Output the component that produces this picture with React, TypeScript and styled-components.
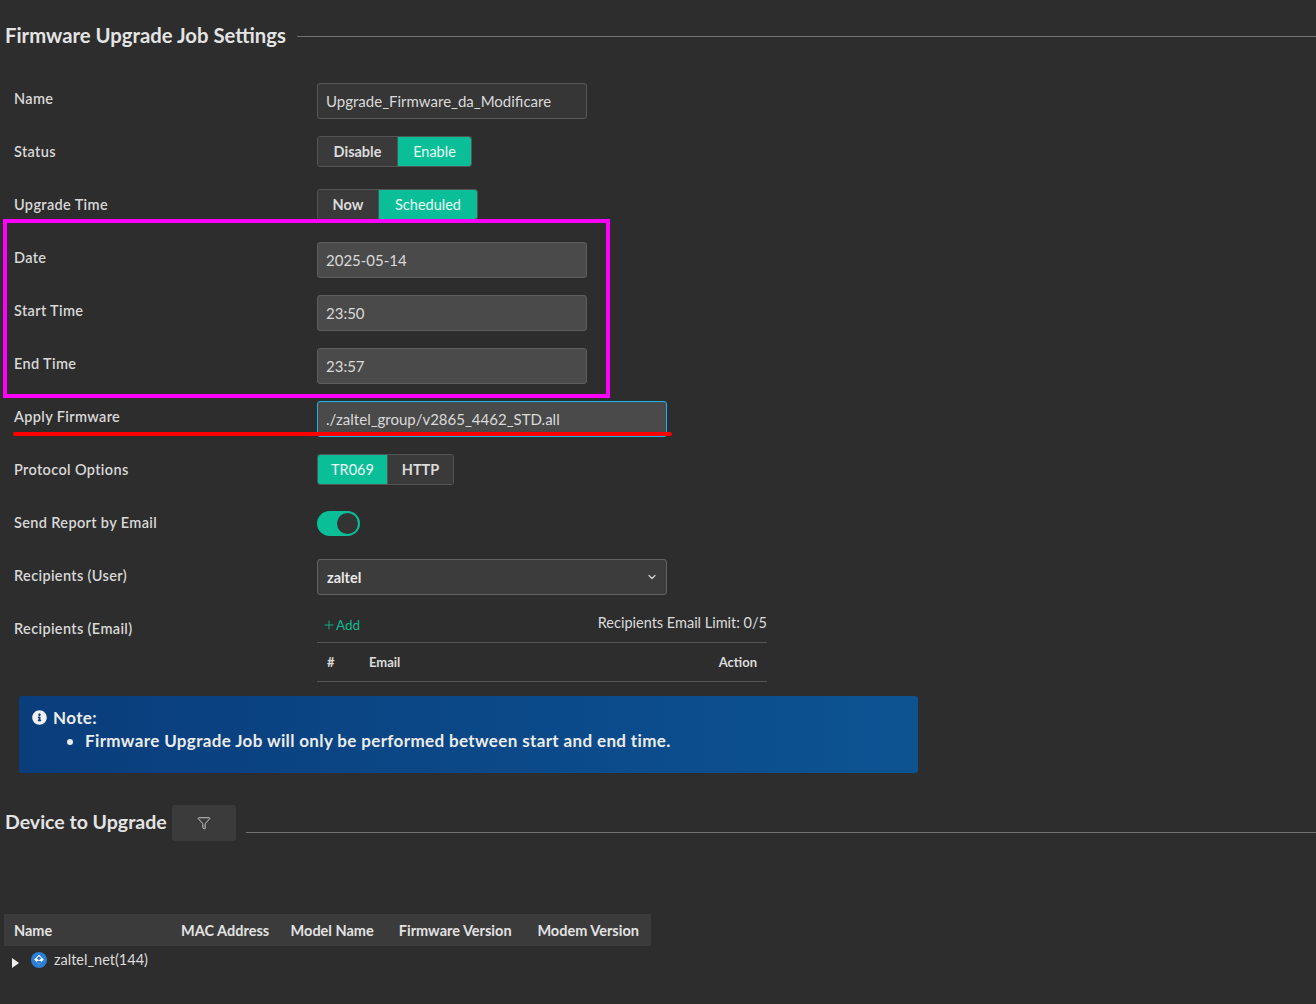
import React from "react";
import styled, { createGlobalStyle } from "styled-components";
import { Funnel, ChevronDown, Plus } from "lucide-react";
import { FaInfoCircle } from "react-icons/fa";

const Global = createGlobalStyle`
  html, body { margin: 0; padding: 0; background: #2d2d2d; }
  body { font-family: Lato, "Open Sans", "Liberation Sans", sans-serif; color: #e0e0e0; }
  * { box-sizing: border-box; }
`;

const Page = styled.div`
  position: relative;
  min-height: 1004px;
  padding: 20px 0 30px 5px;
  overflow: hidden;
`;

const SectionHeader = styled.div<{ $mt?: number; $h?: number }>`
  display: flex;
  align-items: center;
  margin-top: ${(p) => p.$mt ?? 0}px;
  height: ${(p) => p.$h ?? 30}px;
`;

const SectionTitle = styled.h2<{ $up?: number; $size: number }>`
  margin: 0;
  margin-top: ${(p) => -(p.$up ?? 0)}px;
  font-size: ${(p) => p.$size}px;
  font-weight: 700;
  color: #e4e4e4;
  white-space: nowrap;
`;

const Rule = styled.div<{ $ml: number; $mt: number }>`
  flex: 1;
  height: 1px;
  background: #727272;
  margin-left: ${(p) => p.$ml}px;
  margin-top: ${(p) => p.$mt}px;
`;

const Form = styled.div`
  margin-top: 23px;
  padding-left: 9px;
`;

const Row = styled.div<{ $top?: boolean }>`
  display: grid;
  grid-template-columns: 303px 1fr;
  min-height: 53px;
  align-items: ${(p) => (p.$top ? "start" : "center")};
`;

const Label = styled.div<{ $pt?: number }>`
  font-size: 14.5px;
  font-weight: 600;
  letter-spacing: 0.35px;
  color: #d8d8d8;
  line-height: 18px;
  padding-top: ${(p) => p.$pt ?? 0}px;
  margin-top: -2px;
`;

const TextInput = styled.div<{ $w: number; $variant?: "dark" | "light" | "focus" }>`
  width: ${(p) => p.$w}px;
  height: 36px;
  display: flex;
  align-items: center;
  padding: 0 8px;
  font-size: 15px;
  color: #dadada;
  border-radius: 3px;
  background: ${(p) => (p.$variant === "dark" ? "#363636" : "#4a4a4a")};
  border: 1px solid
    ${(p) => (p.$variant === "focus" ? "#1ab4ee" : p.$variant === "dark" ? "#575757" : "#5e5e5e")};
  margin-top: 2px;
`;

const Segmented = styled.div`
  display: flex;
  height: 31px;
  border: 1px solid #555;
  border-radius: 3px;
  overflow: hidden;
  width: max-content;
  margin-top: -2px;
`;

const SegButton = styled.div<{ $active?: boolean; $w: number }>`
  width: ${(p) => p.$w}px;
  display: flex;
  align-items: center;
  justify-content: center;
  font-size: 14.5px;
  font-weight: ${(p) => (p.$active ? 400 : 700)};
  color: ${(p) => (p.$active ? "#eafaf5" : "#dcdcdc")};
  background: ${(p) => (p.$active ? "#0abf97" : "#3a3a3a")};
  & + & {
    border-left: 1px solid #555;
  }
`;

const Toggle = styled.div`
  width: 43px;
  height: 25px;
  border-radius: 13px;
  background: #0abf97;
  position: relative;
  &::after {
    content: "";
    position: absolute;
    right: 2px;
    top: 2px;
    width: 21px;
    height: 21px;
    border-radius: 50%;
    background: #333;
  }
`;

const Select = styled.div`
  width: 350px;
  height: 36px;
  display: flex;
  align-items: center;
  justify-content: space-between;
  padding: 0 8px 0 9px;
  background: #3c3c3c;
  border: 1px solid #626262;
  border-radius: 3px;
  font-size: 14.5px;
  font-weight: 700;
  color: #e8e8e8;
  margin-top: 1px;
`;

const EmailBlock = styled.div`
  width: 450px;
  padding-top: 4px;
`;

const EmailBar = styled.div`
  display: flex;
  align-items: center;
  justify-content: space-between;
  height: 35px;
`;

const AddLink = styled.div`
  display: flex;
  align-items: center;
  color: #12b98f;
  font-size: 13.5px;
  padding-left: 5px;
  margin-top: 1px;
`;

const Limit = styled.div`
  font-size: 14.5px;
  color: #dcdcdc;
  margin-top: -4px;
`;

const MiniTable = styled.div`
  border-top: 1px solid #555;
  border-bottom: 1px solid #555;
  height: 40px;
  display: grid;
  grid-template-columns: 42px 1fr auto;
  align-items: center;
  padding: 0 10px;
  font-size: 13px;
  font-weight: 700;
  color: #dcdcdc;
`;

const Note = styled.div`
  margin: 14px 0 0 14px;
  width: 899px;
  height: 77px;
  border-radius: 3px;
  background: linear-gradient(90deg, #0a3d7b 0%, #0b4a8a 60%, #0d5392 100%);
  padding: 11px 13px;
  color: #ececec;
  font-weight: 700;
  font-size: 17px;
  letter-spacing: 0.36px;
`;

const NoteTitle = styled.div`
  display: flex;
  align-items: center;
  gap: 6px;
  line-height: 21px;
`;

const NoteList = styled.ul`
  margin: 2px 0 0 0;
  padding-left: 53px;
  line-height: 21px;
`;

const FilterButton = styled.div`
  width: 64px;
  height: 36px;
  margin-left: 5px;
  border-radius: 3px;
  background: #3b3b3b;
  display: flex;
  align-items: center;
  justify-content: center;
  color: #d0d0d0;
`;

const DeviceTable = styled.table`
  margin-top: 73px;
  margin-left: -1px;
  border-collapse: collapse;
  font-size: 14.5px;
`;

const Th = styled.th<{ $w: number; $align?: string }>`
  width: ${(p) => p.$w}px;
  height: 32px;
  padding: 0 10px;
  background: #3b3b3b;
  text-align: ${(p) => p.$align ?? "center"};
  font-weight: 700;
  color: #e2e2e2;
  white-space: nowrap;
`;

const Td = styled.td`
  height: 30px;
  padding: 0 0 0 7px;
  color: #dcdcdc;
  white-space: nowrap;
`;

const TreeItem = styled.div`
  display: flex;
  align-items: center;
  margin-top: -3px;
`;

const Caret = styled.span`
  width: 0;
  height: 0;
  border-top: 5.5px solid transparent;
  border-bottom: 5.5px solid transparent;
  border-left: 7px solid #f2f2f2;
  margin: 6px 12px 0 1px;
`;

const ItemName = styled.span`
  margin-left: 7px;
`;

const MagentaBox = styled.div`
  position: absolute;
  left: 3px;
  top: 219px;
  width: 607px;
  height: 179px;
  border: 4px solid #ff00ff;
  pointer-events: none;
`;

const RedLine = styled.div`
  position: absolute;
  left: 13px;
  top: 432px;
  width: 659px;
  height: 4px;
  border-radius: 2px;
  background: #ff0000;
  pointer-events: none;
`;

const NetIcon = () => (
  <svg width="16" height="16" viewBox="0 0 16 16">
    <circle cx="8" cy="8" r="8" fill="#2b7fd6" />
    <path d="M8 2.8 L12.8 7.6 L8 12.6 L3.2 7.6 Z" fill="#fff" />
    <circle cx="8" cy="6.2" r="1.7" fill="#2b7fd6" />
    <path d="M5.3 10.1 Q8 7.6 10.7 10.1 L8 12.2 Z" fill="#2b7fd6" />
  </svg>
);

export default function App() {
  return (
    <Page>
      <Global />
      <SectionHeader>
        <SectionTitle $size={20.3}>Firmware Upgrade Job Settings</SectionTitle>
        <Rule $ml={11} $mt={3} />
      </SectionHeader>

      <Form>
        <Row>
          <Label>Name</Label>
          <TextInput $w={270} $variant="dark">Upgrade_Firmware_da_Modificare</TextInput>
        </Row>
        <Row>
          <Label>Status</Label>
          <Segmented>
            <SegButton $w={79}>Disable</SegButton>
            <SegButton $w={74} $active>Enable</SegButton>
          </Segmented>
        </Row>
        <Row>
          <Label>Upgrade Time</Label>
          <Segmented>
            <SegButton $w={60}>Now</SegButton>
            <SegButton $w={99} $active>Scheduled</SegButton>
          </Segmented>
        </Row>
        <Row>
          <Label>Date</Label>
          <TextInput $w={270}>2025-05-14</TextInput>
        </Row>
        <Row>
          <Label>Start Time</Label>
          <TextInput $w={270}>23:50</TextInput>
        </Row>
        <Row>
          <Label>End Time</Label>
          <TextInput $w={270}>23:57</TextInput>
        </Row>
        <Row>
          <Label>Apply Firmware</Label>
          <TextInput $w={350} $variant="focus">./zaltel_group/v2865_4462_STD.all</TextInput>
        </Row>
        <Row>
          <Label>Protocol Options</Label>
          <Segmented>
            <SegButton $w={69} $active>TR069</SegButton>
            <SegButton $w={66}>HTTP</SegButton>
          </Segmented>
        </Row>
        <Row>
          <Label>Send Report by Email</Label>
          <Toggle />
        </Row>
        <Row>
          <Label>Recipients (User)</Label>
          <Select>
            zaltel
            <ChevronDown size={12} strokeWidth={2.5} color="#d0d0d0" />
          </Select>
        </Row>
        <Row $top>
          <Label $pt={19}>Recipients (Email)</Label>
          <EmailBlock>
            <EmailBar>
              <AddLink>
                <Plus size={14} strokeWidth={1.5} />
                Add
              </AddLink>
              <Limit>Recipients Email Limit: 0/5</Limit>
            </EmailBar>
            <MiniTable>
              <span>#</span>
              <span>Email</span>
              <span>Action</span>
            </MiniTable>
          </EmailBlock>
        </Row>
      </Form>

      <Note>
        <NoteTitle>
          <FaInfoCircle size={15} color="#f0f0f0" />
          Note:
        </NoteTitle>
        <NoteList>
          <li>Firmware Upgrade Job will only be performed between start and end time.</li>
        </NoteList>
      </Note>

      <SectionHeader $mt={32} $h={36}>
        <SectionTitle $size={19.5} $up={4}>Device to Upgrade</SectionTitle>
        <FilterButton>
          <Funnel size={14} strokeWidth={1.6} />
        </FilterButton>
        <Rule $ml={10} $mt={18} />
      </SectionHeader>

      <DeviceTable>
        <thead>
          <tr>
            <Th $w={167} $align="left">Name</Th>
            <Th $w={108}>MAC Address</Th>
            <Th $w={106}>Model Name</Th>
            <Th $w={140}>Firmware Version</Th>
            <Th $w={126}>Modem Version</Th>
          </tr>
        </thead>
        <tbody>
          <tr>
            <Td colSpan={5}>
              <TreeItem>
                <Caret />
                <NetIcon />
                <ItemName>zaltel_net(144)</ItemName>
              </TreeItem>
            </Td>
          </tr>
        </tbody>
      </DeviceTable>

      <MagentaBox />
      <RedLine />
    </Page>
  );
}
